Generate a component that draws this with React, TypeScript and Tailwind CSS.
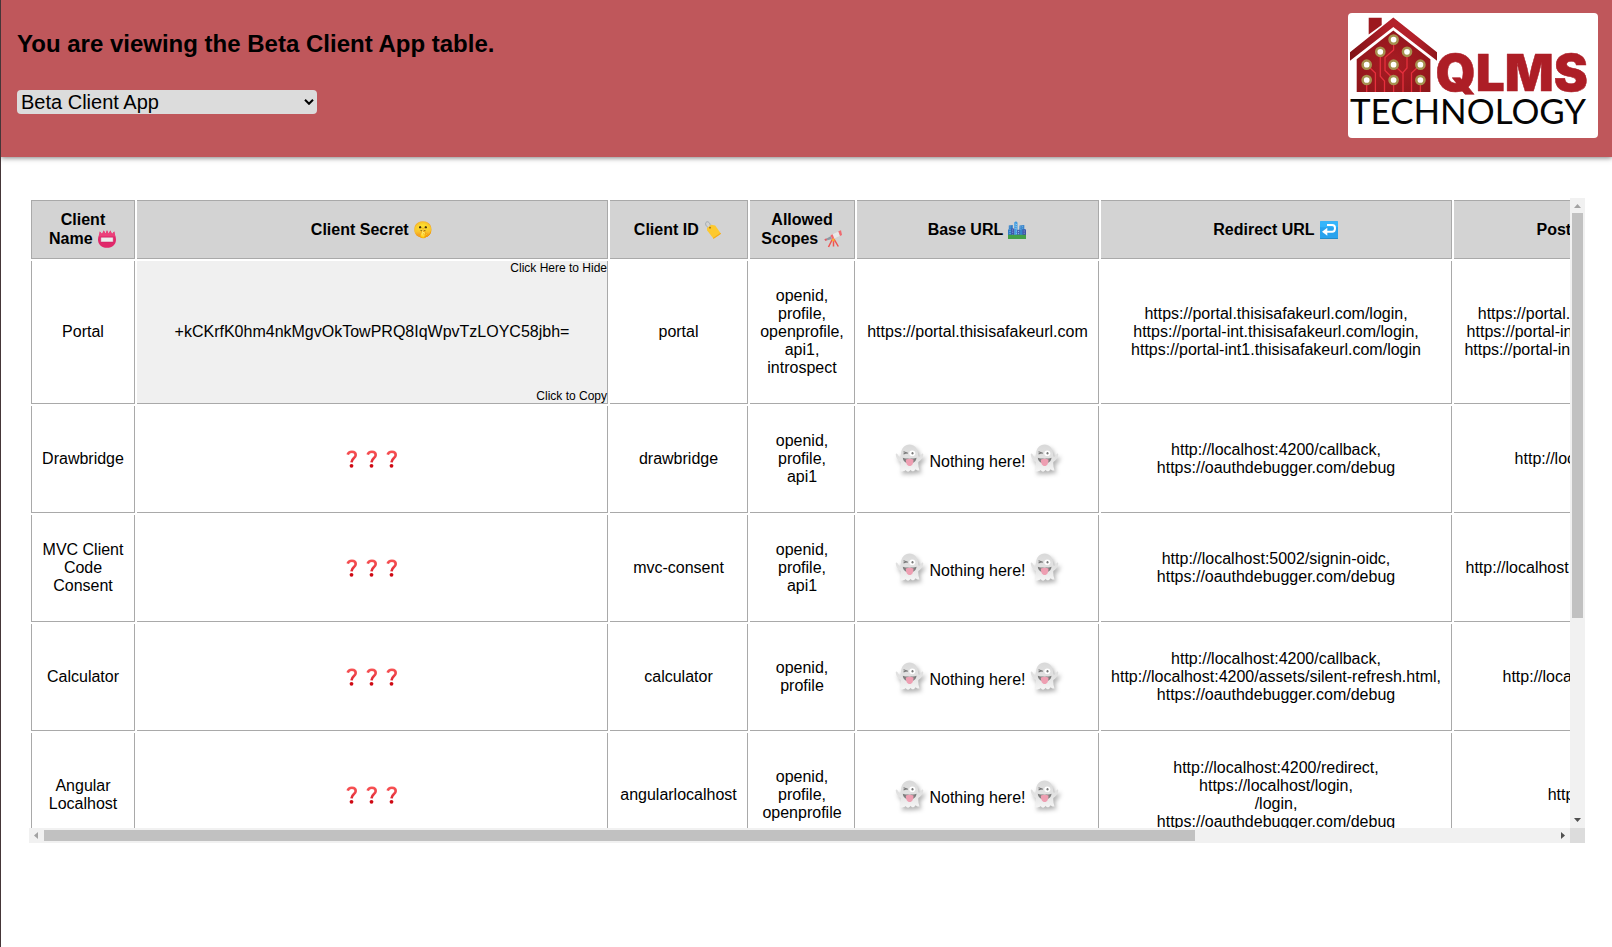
import React from "react";

type Row = {
  name: string[];
  secret?: string;
  id: string;
  scopes: string[];
  base?: string;
  redirect: string[];
  logout: string[];
  logoutPad: string;
  height: string;
};

const rows: Row[] = [
  {
    name: ["Portal"],
    secret: "+kCKrfK0hm4nkMgvOkTowPRQ8IqWpvTzLOYC58jbh=",
    id: "portal",
    scopes: ["openid,", "profile,", "openprofile,", "api1,", "introspect"],
    base: "https://portal.thisisafakeurl.com",
    redirect: [
      "https://portal.thisisafakeurl.com/login,",
      "https://portal-int.thisisafakeurl.com/login,",
      "https://portal-int1.thisisafakeurl.com/login",
    ],
    logout: [
      "https://portal.thisisafakeurl.com/login,",
      "https://portal-int.thisisafakeurl.com/login,",
      "https://portal-int1.thisisafakeurl.com/login",
    ],
    logoutPad: "pl-[10.4px]",
    height: "h-[143px]",
  },
  {
    name: ["Drawbridge"],
    id: "drawbridge",
    scopes: ["openid,", "profile,", "api1"],
    redirect: ["http://localhost:4200/callback,", "https://oauthdebugger.com/debug"],
    logout: ["http://localhost"],
    logoutPad: "pl-[60.6px]",
    height: "h-[107px]",
  },
  {
    name: ["MVC Client", "Code", "Consent"],
    id: "mvc-consent",
    scopes: ["openid,", "profile,", "api1"],
    redirect: ["http://localhost:5002/signin-oidc,", "https://oauthdebugger.com/debug"],
    logout: ["http://localhost"],
    logoutPad: "pl-[11.5px]",
    height: "h-[107px]",
  },
  {
    name: ["Calculator"],
    id: "calculator",
    scopes: ["openid,", "profile"],
    redirect: [
      "http://localhost:4200/callback,",
      "http://localhost:4200/assets/silent-refresh.html,",
      "https://oauthdebugger.com/debug",
    ],
    logout: ["http://localhost"],
    logoutPad: "pl-[48.5px]",
    height: "h-[107px]",
  },
  {
    name: ["Angular", "Localhost"],
    id: "angularlocalhost",
    scopes: ["openid,", "profile,", "openprofile"],
    redirect: [
      "http://localhost:4200/redirect,",
      "https://localhost/login,",
      "/login,",
      "https://oauthdebugger.com/debug",
    ],
    logout: ["http://"],
    logoutPad: "pl-[93.7px]",
    height: "h-[125px]",
  },
];

const Lines = ({ items }: { items: string[] }) => (
  <>
    {items.map((t, i) => (
      <div key={i}>{t}</div>
    ))}
  </>
);

const Ghost = () => (
  <svg
    viewBox="0 0 30 28"
    className="inline-block h-[28px] w-[30px] -translate-y-px overflow-visible align-[-6px] drop-shadow-[2px_3px_2px_rgba(0,0,0,0.3)]"
  >
    <defs>
      <linearGradient id="ghostBody" x1="0" y1="0" x2="0" y2="1">
        <stop offset="0" stopColor="#d9d9d9" />
        <stop offset="0.55" stopColor="#e3e3e3" />
        <stop offset="1" stopColor="#f6f6f6" />
      </linearGradient>
    </defs>
    <path
      d="M14.500 0.500C19.500 0.500 22.500 4 23 9.500C23.100 11 23.500 12.300 24 13C25.100 12.200 26 11.200 26.500 10.200C27.100 9.300 28.300 9.400 28.300 10.500C28.300 13.500 26 16.500 23.300 18C23.100 20.500 23.500 23.500 24.500 26.500C23 26.800 21.800 26.500 20.500 25.300C19 27.800 17 28 15.700 25.800C14.300 28.200 11.800 28.200 10.800 26C9 27.500 6.800 27.800 4.800 27C5.800 24 6 21 5.700 18C3 16.500 0.800 13.500 0.700 10.500C0.700 9.400 1.900 9.300 2.500 10.200C3 11.200 3.900 12.200 5 13C5.500 12.200 5.900 11 6 9.500C6.500 4 9.500 0.500 14.500 0.500Z"
      fill="url(#ghostBody)"
    />
    <ellipse cx="17.300" cy="9.200" rx="3" ry="2.800" fill="#fff" />
    <ellipse cx="17.500" cy="9.300" rx="1" ry="1.300" fill="#777" />
    <path d="M8.500 7.800L11.500 8.800L8.500 10M11.500 9.200H12.800" fill="none" stroke="#777" strokeWidth="1.100" />
    <path d="M7.800 13.800C11.500 15 17.500 15 21.500 13.800C21.300 17 19 19.500 14.500 19.500C10.500 19.500 8.100 17 7.800 13.800Z" fill="#7d7d7d" />
    <path d="M10.800 15.500C13.500 14.500 16 14.500 18.500 15.500C18.500 19.500 17.200 22 14.700 22C12.100 22 10.800 19.500 10.800 15.500Z" fill="#ee9fb2" />
  </svg>
);

const QuestionMark = () => (
  <svg viewBox="0 0 20 18" className="inline-block h-[18px] w-[20px] align-top">
    <defs>
      <linearGradient id="question" gradientUnits="userSpaceOnUse" x1="0" y1="0" x2="0" y2="18">
        <stop offset="0" stopColor="#f95454" />
        <stop offset="0.4" stopColor="#ee4249" />
        <stop offset="1" stopColor="#c90512" />
      </linearGradient>
    </defs>
    <path
      d="M5.700 4.600C6.200 2.600 7.900 1.700 9.900 1.700C12.300 1.700 13.700 3 13.700 5C13.700 8 9.800 8.200 9.500 12.300"
      fill="none"
      stroke="url(#question)"
      strokeWidth="2.600"
    />
    <circle cx="9.500" cy="15.800" r="1.900" fill="#cf0a14" />
  </svg>
);

const NameBadge = () => (
  <svg viewBox="0 0 18 18" className="mx-px inline-block size-[18px] align-[-4px]">
    <path
      d="M1.800 1.500L4 4L5.800 0.500L7.500 3.800L9 0.300L10.600 3.800L12.300 0.500L14 4L16.300 1.500C16.300 4 18 6.500 18 9.500C18 14.500 14.500 17.800 9 17.800S0 14.500 0 9.500C0 6.500 1.800 4 1.800 1.500Z"
      fill="#e0286a"
    />
    <path d="M1.800 1.500L4 4L5.800 0.500L7.500 3.800L9 0.300L10.600 3.800L12.300 0.500L14 4L16.300 1.500L17.200 6.500H0.900Z" fill="#ec407a" />
    <rect x="2.800" y="7.300" width="12.400" height="4.600" rx="0.500" fill="#eee" stroke="#c2185b" strokeWidth="0.400" />
  </svg>
);

const Tag = () => (
  <svg viewBox="0 0 18 18" className="mx-px inline-block size-[18px] align-[-4px]">
    <path d="M5 7C1.500 5.500 0.800 2 2.500 1C4.500 0 6.500 2.500 6.300 5.500" fill="none" stroke="#9aa5ab" strokeWidth="0.900" />
    <path d="M3 7L7.200 3.800L11.200 4.500L17 12.800L9.600 17.700L3.200 9.500Z" fill="#fdc92e" />
    <path d="M17 12.800L9.600 17.700L9 16.900L16.300 11.900Z" fill="#f2a71b" />
    <circle cx="6" cy="6.700" r="0.900" fill="#9a6a12" />
  </svg>
);

const Telescope = () => (
  <svg viewBox="0 0 18 18" className="mx-px inline-block size-[18px] align-[-4px]">
    <path d="M8.500 9L4.500 17M9.500 9V16.500M10 9L14.300 16.500" fill="none" stroke="#ef5350" strokeWidth="1.500" />
    <path d="M0.300 9.300L2.500 8.300L3.300 10.300L1.300 11Z" fill="#d9606a" />
    <path d="M2.600 8.500L7 6L8.200 9L3.400 10.300Z" fill="#8d9aa3" />
    <path d="M6.500 5.300L14.500 1.500L16.200 5.800L8 9.500Z" fill="#e8e8e8" />
    <path d="M6.500 5.300L8.600 4.300L10.300 8.500L8 9.500Z" fill="#ef6a70" />
    <path d="M14.300 1.300L17 0.300L18 5L16 6Z" fill="#ef6a70" />
    <circle cx="9.300" cy="10" r="1.400" fill="#fbb034" />
  </svg>
);

const City = () => (
  <svg viewBox="0 0 18 18" className="mx-px inline-block size-[18px] align-[-4px]">
    <path d="M0.800 4.500L4.800 4V14H0V8.500H0.800Z" fill="#2f7cc6" />
    <path d="M6.200 1.500L8 0.200L9.500 1.500V14H6.200Z" fill="#3f9be0" />
    <path d="M11.500 4.500L16.300 4V8H17.300V14H11Z" fill="#3583cb" />
    <path d="M3.300 7.500H6.200V14H3.300ZM14.500 8.500H18V14H14.500Z" fill="#3f51a5" />
    <path d="M9 8.800H12V14H9Z" fill="#4566b5" />
    <path d="M2 5.500V13M4.700 8.500V13.500M7.200 2.500V8M8.400 3V13M10.500 10V13.500M12.800 5.500V8.500M14.700 5.300V8M16.200 9.500V13.500" stroke="#a5d4f5" strokeWidth="0.800" strokeDasharray="1 1.200" />
    <path d="M0 13.800H18V18H0Z" fill="#43a047" />
  </svg>
);

const ReturnArrow = () => (
  <svg viewBox="0 0 18 18" className="mx-px inline-block size-[18px] align-[-4px]">
    <rect y="0.300" width="18" height="17.500" rx="0.800" fill="#29a3ee" />
    <rect y="0.300" width="18" height="6" rx="0.800" fill="#35b5fb" />
    <rect y="17" width="18" height="0.800" fill="#1883c4" />
    <path d="M7 4H12.200C14 4 15 5.300 15 7.200S14 10.800 12.200 10.800H6" fill="none" stroke="#fff" strokeWidth="2" />
    <path d="M2 10.800L7.300 6.800V14.800Z" fill="#fff" />
  </svg>
);

const pads: [number, number][] = [
  [45.6, 26.6],
  [32.3, 38.8],
  [59, 38.8],
  [18.7, 51.7],
  [45.6, 51.7],
  [72.4, 51.7],
  [18.7, 67],
  [45.6, 67],
  [72.4, 67],
];

const Logo = () => (
  <svg viewBox="0 0 250 125" className="h-[125px] w-[250px] rounded-[4px] bg-white">
    <defs>
      <radialGradient id="wall" cx="0.5" cy="0.55" r="0.65">
        <stop offset="0" stopColor="#a91c24" />
        <stop offset="1" stopColor="#8e151a" />
      </radialGradient>
      <linearGradient id="roof" x1="0" x2="1">
        <stop offset="0" stopColor="#7f1216" />
        <stop offset="0.45" stopColor="#b3212a" />
        <stop offset="0.75" stopColor="#b3212a" />
        <stop offset="1" stopColor="#8f161b" />
      </linearGradient>
    </defs>
    <path d="M20.700 4.800H33.700V12L20.700 21.500Z" fill="#9c181e" />
    <path d="M45.300 4.600L89 39.300V47.800L45.300 14L2 47.800V39.300Z" fill="url(#roof)" />
    <path d="M45.300 17.500L82.400 46.300V79H8.700V46.300Z" fill="url(#wall)" />
    <g fill="none" stroke="#e5303d" strokeWidth="1.300">
      <path d="M45.600 26.600V37L37 44.500V57.500L45.600 66" />
      <path d="M32.300 38.800V63.300L36.500 68V79" />
      <path d="M59 38.800V55L55 59.500V79" />
      <path d="M45.600 51.700L55 60.500" />
      <path d="M72.400 51.700L63.500 60V79" />
      <path d="M18.700 51.700L27.400 60V79" />
      <path d="M18.700 67V79M45.600 67V79M72.400 67V79" />
    </g>
    {pads.map(([x, y], i) => (
      <circle key={i} cx={x} cy={y} r="4.1" fill="#fff" stroke="#a6914f" strokeWidth="2.5" />
    ))}
    <text x="87.500" y="78.300" fontFamily="Inter, sans-serif" fontWeight="900" fontSize="51" textLength="152.500" lengthAdjust="spacingAndGlyphs" stroke="#ad1e26" strokeWidth="0.500" fill="#ad1e26">
      QLMS
    </text>
    <text x="2" y="111" fontFamily="Lato, sans-serif" fontWeight="400" fontSize="34.5" textLength="236" lengthAdjust="spacingAndGlyphs" fill="#050505">
      TECHNOLOGY
    </text>
  </svg>
);

const cell = "border-b border-r border-[#a9a9a9] p-0 align-middle whitespace-nowrap";
const head = "border-b border-r border-t border-[#a9a9a9] bg-[#d3d3d3] p-0 align-middle font-bold leading-[19px] whitespace-nowrap";

export default function App() {
  return (
    <div className="h-[947px] w-[1612px] overflow-hidden border-l border-[#453638] bg-white font-['Liberation_Sans',Arial,sans-serif] text-[16px] leading-[18px] text-black">
      <header className="flex h-[157px] justify-between bg-[#bf575b] pl-4 pr-[14px] pt-[13px] shadow-[0_1px_5px_rgba(0,0,0,0.5)]">
        <div>
          <h1 className="pt-[17px] text-[24px] font-bold leading-[27px]">You are viewing the Beta Client App table.</h1>
          <div className="mt-[33px] flex h-6 w-[300px] items-center justify-between rounded-[4px] bg-[#dcdcdc] pl-1 pr-[3px] text-[20px] leading-6">
            <span>Beta Client App</span>
            <svg viewBox="0 0 10 6" className="h-[6px] w-[10px]" fill="none" stroke="#000" strokeWidth="2">
              <path d="M1 0.800L5 4.800L9 0.800" />
            </svg>
          </div>
        </div>
        <Logo />
      </header>

      <main className="ml-7 mt-[41px] grid h-[645px] w-[1556px] grid-cols-[1541px_15px] grid-rows-[630px_15px]">
        <div className="overflow-hidden">
          <table className="w-[1762px] table-fixed border-separate border-spacing-[2px] text-center">
            <colgroup>
              <col className="w-[104px]" />
              <col className="w-[471px]" />
              <col className="w-[138px]" />
              <col className="w-[105px]" />
              <col className="w-[242px]" />
              <col className="w-[351px]" />
              <col className="w-[335px]" />
            </colgroup>
            <thead>
              <tr className="h-[59px]">
                <th className={`${head} border-l`}>
                  <div className="h-[40px]">Client<br />Name <NameBadge /></div>
                </th>
                <th className={head}>Client Secret 🤫</th>
                <th className={head}>Client ID <Tag /></th>
                <th className={head}>
                  <div className="h-[40px]">Allowed<br />Scopes <Telescope /></div>
                </th>
                <th className={head}>Base URL <City /></th>
                <th className={head}>Redirect URL <ReturnArrow /></th>
                <th className={head}>
                  <div className="pl-[82.5px] text-left">Post Logout</div>
                </th>
              </tr>
            </thead>
            <tbody>
              {rows.map((r) => (
                <tr key={r.id} className={r.height}>
                  <td className={`${cell} border-l`}><Lines items={r.name} /></td>
                  {r.secret ? (
                    <td className={`${cell} bg-[#f0f0f0]`}>
                      <div className="flex h-[142px] flex-col justify-between">
                        <div className="text-right text-[12px] leading-[14px]">Click Here to Hide</div>
                        <div>{r.secret}</div>
                        <div className="text-right text-[12px] leading-[14px]">Click to Copy</div>
                      </div>
                    </td>
                  ) : (
                    <td className={cell}>
                      <QuestionMark /><QuestionMark /><QuestionMark />
                    </td>
                  )}
                  <td className={cell}>{r.id}</td>
                  <td className={cell}><Lines items={r.scopes} /></td>
                  <td className={cell}>
                    {r.base ?? (
                      <>
                        <Ghost /> Nothing here! <Ghost />
                      </>
                    )}
                  </td>
                  <td className={cell}><Lines items={r.redirect} /></td>
                  <td className={cell}>
                    <div className={`text-left ${r.logoutPad}`}>
                      <div className="inline-block text-center align-top"><Lines items={r.logout} /></div>
                    </div>
                  </td>
                </tr>
              ))}
            </tbody>
          </table>
        </div>
        <div className="flex flex-col items-center bg-[#f1f1f1]">
          <svg viewBox="0 0 15 15" className="size-[15px]"><path d="M4 10L7.500 6L11 10Z" fill="#a3a3a3" /></svg>
          <div className="h-[405px] w-[11px] bg-[#c1c1c1]" />
          <svg viewBox="0 0 15 15" className="mt-auto size-[15px]"><path d="M4 5L7.500 9L11 5Z" fill="#505050" /></svg>
        </div>
        <div className="flex items-center bg-[#f1f1f1]">
          <svg viewBox="0 0 15 15" className="size-[15px]"><path d="M9 4L5 7.500L9 11Z" fill="#a3a3a3" /></svg>
          <div className="h-[11px] w-[1151px] bg-[#c1c1c1]" />
          <svg viewBox="0 0 15 15" className="ml-auto size-[15px]"><path d="M6 4L10 7.500L6 11Z" fill="#505050" /></svg>
        </div>
        <div className="bg-[#dcdcdc]" />
      </main>
    </div>
  );
}
